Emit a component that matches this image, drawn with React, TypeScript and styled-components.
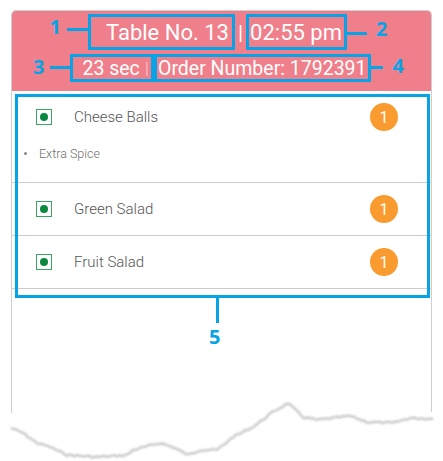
import React from 'react';
import styled, { createGlobalStyle } from 'styled-components';

const GlobalStyle = createGlobalStyle`
  body {
    margin: 0;
    background: #ffffff;
    font-family: Roboto, "Liberation Sans", sans-serif;
  }
`;

const BLUE = '#06a3e6';

const Page = styled.div`
  width: 443px;
  height: 461px;
  padding-top: 10px;
  box-sizing: border-box;
  overflow: hidden;
`;

const Card = styled.div`
  margin-left: 11px;
  width: 421px;
  height: 390px;
  box-sizing: border-box;
  border: 1px solid #cfcfcf;
  border-bottom: none;
  border-radius: 5px 5px 0 0;
  display: flex;
  flex-direction: column;
`;

const Header = styled.div`
  background: #ef808b;
  border-radius: 4px 4px 0 0;
  height: 80px;
  padding-top: 3px;
  box-sizing: border-box;
  display: flex;
  flex-direction: column;
  align-items: center;
  gap: 4px;
  color: #ffffff;
`;

const HeaderRow = styled.div<{ $shift: number }>`
  display: flex;
  align-items: flex-start;
  justify-content: center;
  width: 100%;
  box-sizing: border-box;
  padding-right: ${({ $shift }) => $shift}px;
`;

const Mark = styled.span<{ $h: number; $size: number }>`
  display: inline-flex;
  align-items: center;
  border: 3px solid ${BLUE};
  height: ${({ $h }) => $h}px;
  box-sizing: border-box;
  font-size: ${({ $size }) => $size}px;
  white-space: nowrap;
`;

const MarkText = styled.span<{ $pl: number; $pr: number }>`
  padding-left: ${({ $pl }) => $pl}px;
  padding-right: ${({ $pr }) => $pr}px;
`;

const Sep = styled.span<{ $light?: boolean }>`
  align-self: center;
  font-size: ${({ $light }) => ($light ? 17 : 21)}px;
  opacity: ${({ $light }) => ($light ? 0.45 : 1)};
  margin: ${({ $light }) => ($light ? '0 2px 0 5px' : '2px 3px 0')};
  line-height: 1;
`;

const Connector = styled.span<{ $w: number; $top: number }>`
  display: block;
  width: ${({ $w }) => $w}px;
  height: 3px;
  background: ${BLUE};
  margin-top: ${({ $top }) => $top}px;
`;

const Label = styled.span<{ $top: number; $gap: number; $side: 'left' | 'right' }>`
  font-family: "Open Sans", "DejaVu Sans", sans-serif;
  font-weight: 700;
  font-size: 20px;
  line-height: 20px;
  color: ${BLUE};
  margin-top: ${({ $top }) => $top}px;
  ${({ $side, $gap }) => ($side === 'left' ? `margin-right: ${$gap}px;` : `margin-left: ${$gap}px;`)}
`;

const ListArea = styled.div`
  position: relative;
`;

const Item = styled.div`
  border-bottom: 1px solid #cccccc;
  padding: 12px 0 12px 0;
`;

const ItemLine = styled.div`
  display: flex;
  align-items: center;
  height: 28px;
  padding-left: 24px;
  padding-right: 33px;
`;

const VegIcon = styled.span`
  width: 16px;
  height: 16px;
  box-sizing: border-box;
  border: 1.5px solid #3aa862;
  display: flex;
  align-items: center;
  justify-content: center;
  &::after {
    content: '';
    width: 8px;
    height: 8px;
    border-radius: 50%;
    background: #08893f;
  }
`;

const ItemName = styled.span`
  flex: 1;
  margin-left: 22px;
  font-size: 15px;
  font-weight: 300;
  color: #555555;
`;

const Qty = styled.span`
  width: 28px;
  height: 28px;
  border-radius: 50%;
  background: #f99b2f;
  color: #ffffff;
  font-size: 16px;
  display: flex;
  align-items: center;
  justify-content: center;
`;

const Extras = styled.ul`
  list-style: none;
  margin: 14px 0 9px 0;
  padding: 0 0 0 12px;
`;

const Extra = styled.li`
  display: flex;
  align-items: center;
  height: 16px;
  font-size: 12.5px;
  font-weight: 300;
  color: #707070;
  &::before {
    content: '';
    width: 3px;
    height: 3px;
    border-radius: 50%;
    background: #888888;
    margin-right: 12px;
  }
`;

const Callout = styled.div`
  position: absolute;
  left: 3px;
  right: 1px;
  top: 3px;
  bottom: -9px;
  border: 3px solid ${BLUE};
  pointer-events: none;
`;

const CalloutStem = styled.div`
  position: absolute;
  left: 198px;
  top: 100%;
  width: 3px;
  height: 28px;
  background: ${BLUE};
`;

const CalloutLabel = styled.span`
  position: absolute;
  left: 191px;
  top: calc(100% + 31px);
  font-family: "Open Sans", "DejaVu Sans", sans-serif;
  font-weight: 700;
  font-size: 20px;
  line-height: 22px;
  color: ${BLUE};
`;

const TornEdge = styled.svg`
  display: block;
`;

type OrderItem = { name: string; qty: number; extras?: string[] };

const items: OrderItem[] = [
  { name: 'Cheese Balls', qty: 1, extras: ['Extra Spice'] },
  { name: 'Green Salad', qty: 1 },
  { name: 'Fruit Salad', qty: 1 },
];

// rough outline of the torn paper, jittered a little so it looks ripped
const tearAnchors: [number, number][] = [
  [11, 28], [23, 33], [37, 43], [50, 47], [67, 55], [97, 57], [127, 55], [133, 50],
  [160, 43], [173, 47], [188, 55], [200, 50], [217, 50], [233, 37], [253, 27],
  [273, 12], [288, 3], [303, 17], [317, 20], [350, 16], [367, 22], [393, 23],
  [410, 18], [433, 19],
];

const buildTear = () => {
  const pts: string[] = [];
  let seed = 7;
  const rnd = () => {
    seed = (seed * 9301 + 49297) % 233280;
    return seed / 233280;
  };
  for (let i = 0; i < tearAnchors.length - 1; i++) {
    const [x1, y1] = tearAnchors[i];
    const [x2, y2] = tearAnchors[i + 1];
    const steps = Math.max(2, Math.round((x2 - x1) / 2.5));
    for (let s = 0; s < steps; s++) {
      const t = s / steps;
      const x = x1 + (x2 - x1) * t;
      const y = y1 + (y2 - y1) * t + (rnd() - 0.5) * 2;
      pts.push(`${x.toFixed(1)},${y.toFixed(1)}`);
    }
  }
  const last = tearAnchors[tearAnchors.length - 1];
  pts.push(`${last[0]},${last[1]}`);
  return pts.join(' ');
};

const tearLine = buildTear();

const App = () => {
  return (
    <Page>
      <GlobalStyle />
      <Card>
        <Header>
          <HeaderRow $shift={6}>
            <Label $side="left" $top={3} $gap={6}>1</Label>
            <Connector $w={21} $top={14} />
            <Mark $h={36} $size={22}>
              <MarkText $pl={15} $pr={3}>Table No. 13</MarkText>
            </Mark>
            <Sep>|</Sep>
            <Mark $h={36} $size={22}>
              <MarkText $pl={1} $pr={2}>02:55 pm</MarkText>
            </Mark>
            <Connector $w={20} $top={18} />
            <Label $side="right" $top={5} $gap={9}>2</Label>
          </HeaderRow>
          <HeaderRow $shift={6}>
            <Label $side="left" $top={3} $gap={6}>3</Label>
            <Connector $w={20} $top={12} />
            <Mark $h={28} $size={19.5}>
              <MarkText $pl={9} $pr={0}>23 sec</MarkText>
              <Sep $light>|</Sep>
            </Mark>
            <Mark $h={28} $size={19.5}>
              <MarkText $pl={1} $pr={1}>Order Number: 1792391</MarkText>
            </Mark>
            <Connector $w={12} $top={12} />
            <Label $side="right" $top={2} $gap={10}>4</Label>
          </HeaderRow>
        </Header>
        <ListArea>
          {items.map((item) => (
            <Item key={item.name}>
              <ItemLine>
                <VegIcon />
                <ItemName>{item.name}</ItemName>
                <Qty>{item.qty}</Qty>
              </ItemLine>
              {item.extras && (
                <Extras>
                  {item.extras.map((e) => (
                    <Extra key={e}>{e}</Extra>
                  ))}
                </Extras>
              )}
            </Item>
          ))}
          <Callout>
            <CalloutStem />
            <CalloutLabel>5</CalloutLabel>
          </Callout>
        </ListArea>
      </Card>
      <TornEdge width="443" height="61" viewBox="0 0 443 61">
        <defs>
          <filter id="tear-soft" x="-5%" y="-50%" width="110%" height="200%">
            <feGaussianBlur stdDeviation="1" />
          </filter>
        </defs>
        <line x1="11.5" y1="0" x2="11.5" y2="13" stroke="#cfcfcf" strokeWidth="1" />
        <line x1="431.5" y1="0" x2="431.5" y2="12" stroke="#cfcfcf" strokeWidth="1" />
        <polyline
          points={tearLine}
          fill="none"
          stroke="#bdbdbd"
          strokeWidth="2"
          filter="url(#tear-soft)"
        />
        <polyline points={tearLine} fill="none" stroke="#e2e2e2" strokeWidth="0.7" transform="translate(0,-1)" />
      </TornEdge>
    </Page>
  );
};

export default App;
